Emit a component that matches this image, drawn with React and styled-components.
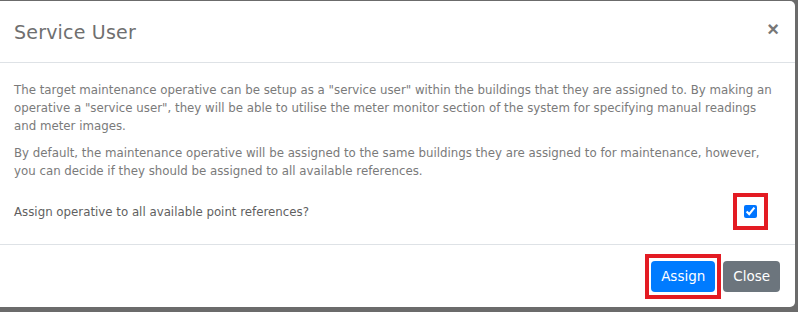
import React, { useState } from "react";
import styled, { createGlobalStyle } from "styled-components";

const GlobalStyle = createGlobalStyle`
    html, body {
        margin: 0;
        padding: 0;
        background: #6b6b6b;
        font-family: "DejaVu Sans", "Noto Sans", sans-serif;
    }
    * { box-sizing: border-box; }
`;

const Backdrop = styled.div`
    width: 798px;
    height: 312px;
    padding: 1px 3px 5px 0;
    background: #6b6b6b;
`;

const Modal = styled.div`
    display: flex;
    flex-direction: column;
    height: 100%;
    background: #fff;
    border-radius: 0 5px 5px 0;
`;

const Header = styled.div`
    display: flex;
    align-items: center;
    justify-content: space-between;
    height: 62px;
    padding: 0 16px 0 14px;
    border-bottom: 1px solid #dee2e6;
`;

const Title = styled.h5`
    margin: 0;
    font-size: 19px;
    font-weight: 400;
    color: #6f6f6f;
    letter-spacing: 0.2px;
`;

const CloseX = styled.button`
    border: 0;
    background: transparent;
    padding: 0;
    margin-top: -5px;
    font-size: 20px;
    font-weight: 700;
    line-height: 1;
    color: #777;
    cursor: pointer;
`;

const Body = styled.div`
    flex: 1;
    padding: 18px 14px 0 14px;
    border-bottom: 1px solid #dee2e6;
`;

const Para = styled.p`
    margin: 0 0 9px 0;
    font-size: 11.8px;
    line-height: 18px;
    color: #7a7a7a;
`;

const OptionRow = styled.div`
    display: flex;
    align-items: center;
    justify-content: space-between;
    margin-top: 13px;
    padding-right: 13px;
`;

const OptionLabel = styled.label`
    font-size: 11.8px;
    font-weight: 500;
    color: #5f5f5f;
`;

const Highlight = styled.span`
    display: inline-flex;
    flex: none;
    align-items: center;
    justify-content: center;
    width: ${p => p.$w}px;
    height: ${p => p.$h}px;
    border: 4px solid #e31b23;
`;

const Check = styled.input`
    width: 13px;
    height: 13px;
    margin: 0;
    accent-color: #0075ff;
`;

const Footer = styled.div`
    display: flex;
    align-items: center;
    justify-content: flex-end;
    gap: 2px;
    height: 62px;
    padding-right: 15px;
`;

const Button = styled.button`
    height: 31px;
    padding: 0 10px;
    border: 0;
    border-radius: 4px;
    font-family: inherit;
    font-size: 13.5px;
    color: #fff;
    background: ${p => (p.$variant === "primary" ? "#007bff" : "#6c757d")};
    cursor: pointer;
`;

export default function App() {
    const [allRefs, setAllRefs] = useState(true);

    return (
        <>
            <GlobalStyle />
            <Backdrop>
                <Modal>
                    <Header>
                        <Title>Service User</Title>
                        <CloseX aria-label="Close">×</CloseX>
                    </Header>
                    <Body>
                        <Para>
                            The target maintenance operative can be setup as a "service user" within the buildings that they are assigned to. By making an operative a "service user", they will be able to utilise the meter monitor section of the system for specifying manual readings and meter images.
                        </Para>
                        <Para>
                            By default, the maintenance operative will be assigned to the same buildings they are assigned to for maintenance, however, you can decide if they should be assigned to all available references.
                        </Para>
                        <OptionRow>
                            <OptionLabel htmlFor="allRefs">Assign operative to all available point references?</OptionLabel>
                            <Highlight $w={35} $h={37}>
                                <Check
                                    id="allRefs"
                                    type="checkbox"
                                    checked={allRefs}
                                    onChange={e => setAllRefs(e.target.checked)}
                                />
                            </Highlight>
                        </OptionRow>
                    </Body>
                    <Footer>
                        <Highlight $w={76} $h={45}>
                            <Button $variant="primary">Assign</Button>
                        </Highlight>
                        <Button $variant="secondary">Close</Button>
                    </Footer>
                </Modal>
            </Backdrop>
        </>
    );
}
